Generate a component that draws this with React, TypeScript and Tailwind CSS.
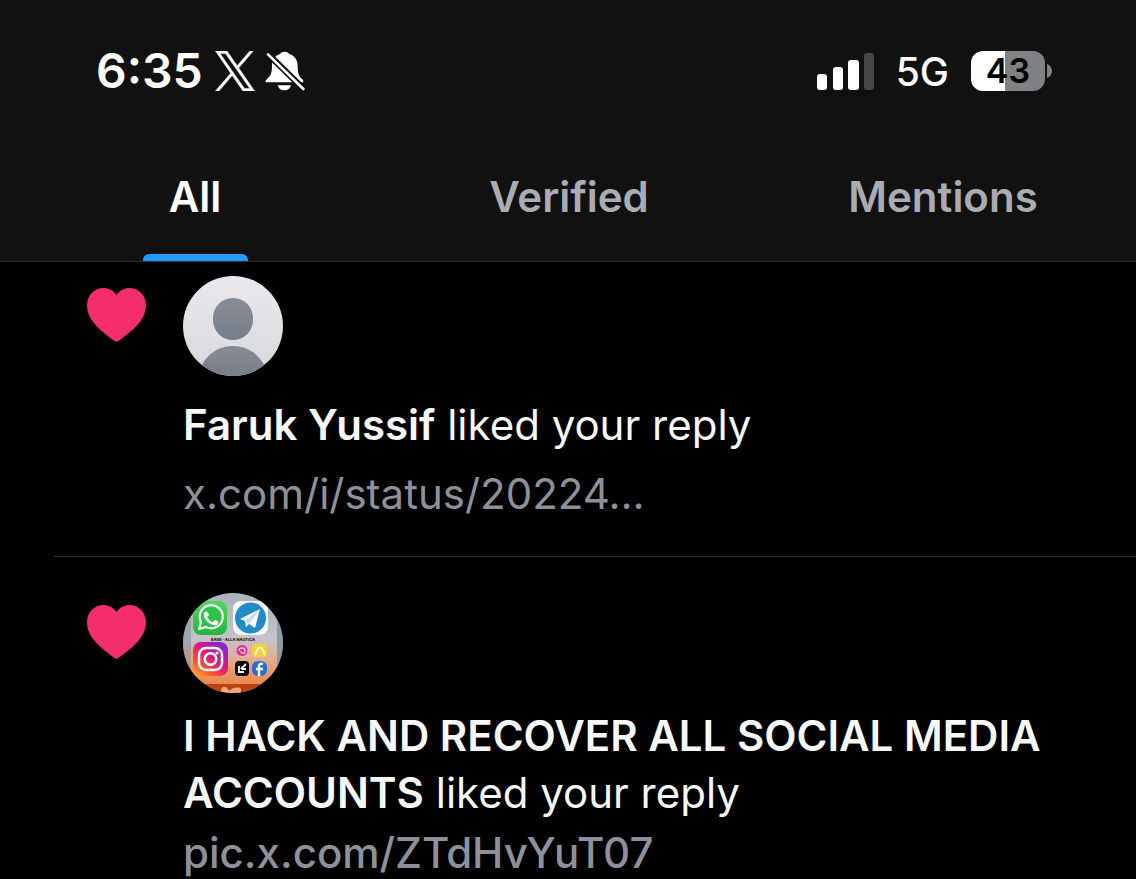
import { useState } from "react";
import type { ReactNode } from "react";

const tabs = ["All", "Verified", "Mentions"];

function XLogo() {
  return (
    <svg viewBox="0 0 1200 1227" className="h-10 w-10" fill="#fff" stroke="#fff" strokeWidth="14" aria-hidden="true">
      <path d="M714.163 519.284L1160.89 0H1055.03L667.137 450.887L357.328 0H0L468.492 681.821L0 1226.37H105.866L515.491 750.218L842.672 1226.37H1200L714.137 519.284H714.163ZM569.165 687.828L521.697 619.934L144.011 79.694H306.615L611.412 515.685L658.88 583.579L1055.08 1150.3H892.476L569.165 687.854V687.828Z" />
    </svg>
  );
}

function BellOff() {
  return (
    <svg viewBox="0 0 120 120" className="h-10 w-10" aria-hidden="true">
      <path
        d="M59 2C51 2 47 6 45 9C29 14 21 29 21 45C21 66 17 74 7 83C3 87 1 90 2 94H115C116 89 113 86 109 82C101 74 98 65 98 45C98 27 89 14 73 9C71 6 67 2 59 2Z"
        fill="#fff"
      />
      <path d="M38 103H78C76 112 69 118 58 118S40 112 38 103Z" fill="#fff" />
      <path d="M4 4L120 118" stroke="#111" strokeWidth="19" />
      <path d="M9 10L115 114" stroke="#fff" strokeWidth="8" strokeLinecap="round" />
    </svg>
  );
}

function Signal() {
  return (
    <svg viewBox="0 0 57 38" className="h-[38px] w-[57px]" fill="#fff" aria-label="Signal strength">
      <rect x="0" y="22" width="10" height="16" rx="3" />
      <rect x="16" y="15" width="10" height="23" rx="3" />
      <rect x="31" y="8" width="11" height="30" rx="3" />
      <rect x="47" y="1" width="10" height="37" rx="3" fill="#454545" />
    </svg>
  );
}

function Battery() {
  return (
    <div className="flex items-center gap-0.5">
      <div className="flex h-10 w-[74px] items-center justify-center rounded-xl bg-linear-to-r from-white from-46% to-[#7f8183] to-46% text-[34px] leading-10 font-semibold text-black">
        43
      </div>
      <svg viewBox="0 0 5 14" className="h-3.5 w-[5px]" aria-hidden="true">
        <path d="M0 0C3 1 5 4 5 7S3 13 0 14Z" fill="#7f8183" />
      </svg>
    </div>
  );
}

function Heart() {
  return (
    <svg viewBox="0 0 59 54" className="mt-3 h-[54px] w-[59px] shrink-0" aria-label="Like">
      <path
        d="M29.5 7C26 2 21 0 16.5 0C7 0 0 7.5 0 17.5C0 31 11 41 27.500 53Q29.500 54.500 31.500 53C48 41 59 31 59 17.500C59 7.500 52 0 42.500 0C38 0 33 2 29.500 7Z"
        fill="#f42e6d"
      />
    </svg>
  );
}

function PersonAvatar() {
  return (
    <svg viewBox="0 0 100 100" className="size-[100px]" aria-label="Faruk Yussif">
      <defs>
        <clipPath id="person-clip">
          <circle cx="50" cy="50" r="50" />
        </clipPath>
        <linearGradient id="person-bg" x1="0" y1="0" x2="0" y2="1">
          <stop offset="0" stopColor="#e9e9ed" />
          <stop offset="1" stopColor="#d7d8dd" />
        </linearGradient>
        <linearGradient id="person-fg" x1="0" y1="0" x2="0" y2="1">
          <stop offset="0" stopColor="#888c95" />
          <stop offset="1" stopColor="#777e88" />
        </linearGradient>
      </defs>
      <g clipPath="url(#person-clip)">
        <rect width="100" height="100" fill="url(#person-bg)" />
        <rect x="30" y="22" width="40" height="42" rx="20" fill="url(#person-fg)" />
        <path d="M16 96C21 80 34 70 50 70S79 80 84 96V100H16Z" fill="url(#person-fg)" />
      </g>
    </svg>
  );
}

function AppsAvatar() {
  return (
    <svg viewBox="0 0 100 100" className="size-[100px]" aria-label="Social media icons">
      <defs>
        <clipPath id="apps-clip">
          <circle cx="50" cy="50" r="50" />
        </clipPath>
        <linearGradient id="apps-bg" x1="0" y1="0" x2="0" y2="1">
          <stop offset="0" stopColor="#a9b3b9" />
          <stop offset=".45" stopColor="#c4c3ca" />
          <stop offset=".68" stopColor="#e4aa8a" />
          <stop offset="1" stopColor="#f07a37" />
        </linearGradient>
        <linearGradient id="wa" x1="0" y1="0" x2="0" y2="1">
          <stop offset="0" stopColor="#4ed863" />
          <stop offset="1" stopColor="#25b53b" />
        </linearGradient>
        <linearGradient id="ig" x1="0" y1="1" x2=".8" y2="0">
          <stop offset="0" stopColor="#ffb52c" />
          <stop offset=".3" stopColor="#f8532f" />
          <stop offset=".6" stopColor="#d81880" />
          <stop offset="1" stopColor="#7a28d8" />
        </linearGradient>
      </defs>
      <g clipPath="url(#apps-clip)">
        <rect width="100" height="100" fill="url(#apps-bg)" />
        <path d="M0 0H8V100H0Z" fill="#6f8790" opacity=".45" />
        <path d="M94 0H100V100H94Z" fill="#718d99" opacity=".7" />
        <rect y="91" width="100" height="9" fill="#b8440f" />
        <path d="M38 96C40 93 44 93 45 97H48C50 94 57 94 58 96V100H38Z" fill="#efa77e" />
        <rect x="10" y="8" width="34" height="34" rx="8" fill="url(#wa)" />
        <path d="M16 36L18 29A11.500 11.500 0 1 1 23 34Z" fill="#2fc24a" stroke="#fff" strokeWidth="2.200" strokeLinejoin="round" />
        <path d="M21 20C23 17 25 19 26 22L24 24C26 27 28 29 30 29L32 27C36 28 36 30 34 32C29 34 19 26 21 20Z" fill="#fff" />
        <rect x="50" y="8" width="35" height="34" rx="8" fill="#f4f8fc" />
        <circle cx="67.5" cy="25" r="15.5" fill="#238cc7" />
        <path d="M57 26L77 16L72 35L66 31L63 34L62 28Z" fill="#fff" />
        <path d="M62 28L77 16L66 31" fill="#bbdcf0" />
        <text x="50" y="47.500" textAnchor="middle" fontSize="4" fontWeight="800" fill="#151515">SAVE · ALLA NAUTICA</text>
        <rect x="10" y="49" width="35" height="34" rx="8" fill="url(#ig)" />
        <rect x="16" y="55" width="23" height="22" rx="7" fill="none" stroke="#fff" strokeWidth="2.500" />
        <circle cx="27.5" cy="66" r="5.8" fill="none" stroke="#fff" strokeWidth="2.5" />
        <circle cx="34" cy="60" r="1.5" fill="#fff" />
        <rect x="52" y="51" width="14" height="13" rx="3" fill="#e9a8c5" />
        <circle cx="59" cy="57.5" r="5.5" fill="#c83986" />
        <path d="M56 58C56 54 62 54 62 58S57 60 58 58" fill="none" stroke="#f6c5dc" strokeWidth="1.3" />
        <rect x="69" y="51" width="15" height="13" rx="2" fill="#f3cf42" />
        <path d="M72 62C74 60 73 55 77 54.500S80 60 82 62" fill="none" stroke="#fff5bb" strokeWidth="2" />
        <rect x="52" y="68" width="14" height="15" rx="4" fill="#080808" />
        <path d="M56 73V79H61M58 76L63 71M59 76H63" fill="none" stroke="#fff" strokeWidth="1.8" />
        <rect x="69" y="68" width="15" height="15" rx="6" fill="#236fd7" />
        <path d="M76 83V73Q76 70 80 71M73 76H80" fill="none" stroke="#fff" strokeWidth="2.4" />
      </g>
    </svg>
  );
}

function Notification({ avatar, children }: { avatar: ReactNode; children: ReactNode }) {
  return (
    <article className="flex gap-[37px] pl-[33px]">
      <Heart />
      <div className="min-w-0 flex-1 text-[42px] leading-[57px]">
        {avatar}
        {children}
      </div>
    </article>
  );
}

export default function App() {
  const [active, setActive] = useState("All");
  return (
    <div className="h-screen overflow-hidden bg-black font-['Inter',sans-serif] text-[#f7f7f7]">
      <header className="border-b border-[#2a2a2c] bg-[#111111]">
        <div className="flex h-[142px] items-center justify-between pr-[84px] pl-24 text-white">
          <div className="flex items-center gap-3">
            <time className="text-[48px] leading-none font-semibold">6:35</time>
            <div className="flex items-center gap-2.5">
              <XLogo />
              <BellOff />
            </div>
          </div>
          <div className="flex items-center gap-[22px]">
            <Signal />
            <span className="text-[39px] leading-none font-medium">5G</span>
            <Battery />
          </div>
        </div>
        <nav role="tablist" className="grid grid-cols-3 pr-1.5 pl-2">
          {tabs.map((tab) => (
            <button
              key={tab}
              role="tab"
              aria-selected={active === tab}
              onClick={() => setActive(tab)}
              className={
                active === tab
                  ? "flex flex-col items-center text-[42px] font-semibold text-white"
                  : "flex flex-col items-center text-[42px] font-semibold text-[#aaabb3]"
              }
            >
              <span className="pt-6 pb-[26px] leading-[62px]">{tab}</span>
              <span className={active === tab ? "h-[7px] w-[105px] rounded-t-md bg-[#2599f7]" : "h-[7px]"} />
            </button>
          ))}
        </nav>
      </header>

      <main className="pl-[54px]">
        <div className="border-b border-[#2f3032] pt-3.5 pb-[34px]">
          <Notification avatar={<PersonAvatar />}>
            <p className="mt-5">
              <strong className="font-semibold">Faruk Yussif</strong> liked your reply
            </p>
            <a href="#status" className="mt-3 block text-[#8e9199]">
              x.com/i/status/20224...
            </a>
          </Notification>
        </div>
        <div className="pt-9">
          <Notification avatar={<AppsAvatar />}>
            <p className="mt-3.5">
              <strong className="font-semibold">I HACK AND RECOVER ALL SOCIAL MEDIA ACCOUNTS</strong> liked your reply
            </p>
            <a href="#picture" className="mt-[3px] block font-medium text-[#8e9199]">
              pic.x.com/ZTdHvYuT07
            </a>
          </Notification>
        </div>
      </main>
    </div>
  );
}
